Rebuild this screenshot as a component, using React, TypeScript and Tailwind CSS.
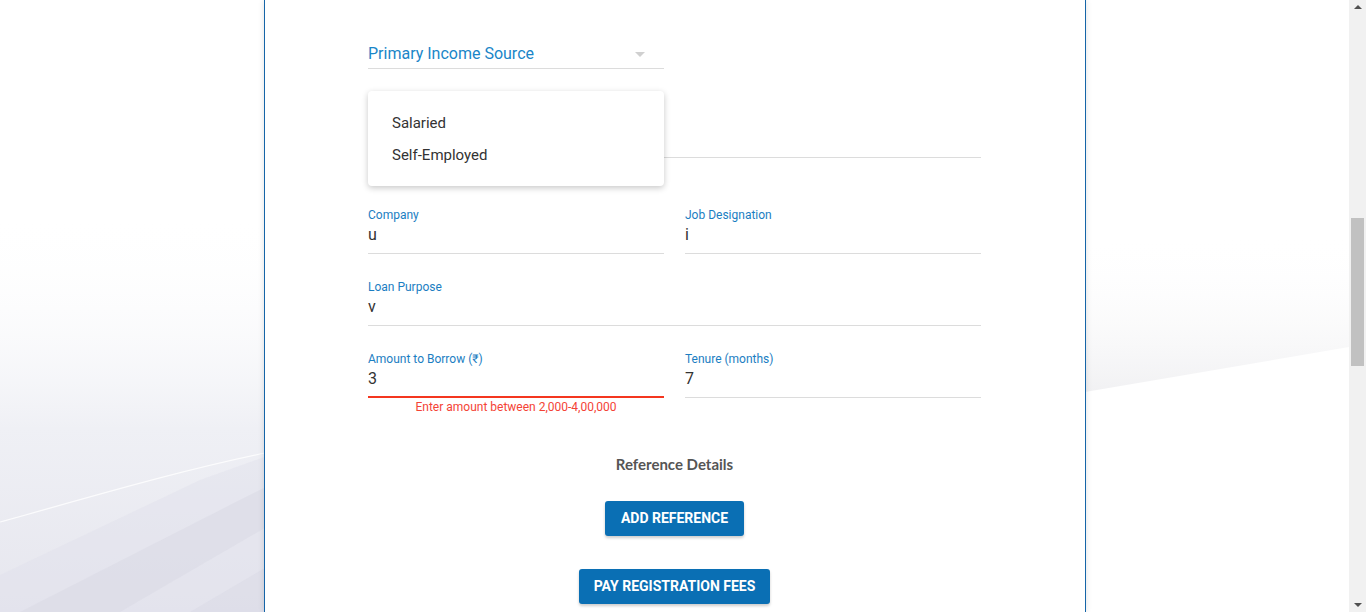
import React from 'react';

const FONT = { fontFamily: 'Roboto, "Liberation Sans", sans-serif' };

const Backdrop = () => (
  <svg className="absolute inset-0 h-full w-full" viewBox="0 0 1349 612" preserveAspectRatio="none">
    <defs>
      <linearGradient id="lfade" x1="0" y1="0" x2="0" y2="1">
        <stop offset="0.35" stopColor="#ffffff" stopOpacity="0" />
        <stop offset="0.7" stopColor="#eff0f5" stopOpacity="1" />
        <stop offset="1" stopColor="#e6e6ee" stopOpacity="1" />
      </linearGradient>
      <linearGradient id="rband" x1="0" y1="0" x2="0" y2="1">
        <stop offset="0" stopColor="#ffffff" stopOpacity="0" />
        <stop offset="1" stopColor="#f1f1f3" stopOpacity="1" />
      </linearGradient>
    </defs>
    <rect x="0" y="0" width="270" height="612" fill="url(#lfade)" />
    <polygon points="0,612 0,575 200,480 270,455 270,612" fill="#e0e0ea" opacity="0.45" />
    <polygon points="20,612 230,505 270,485 270,525 120,612" fill="#d6d6e3" opacity="0.45" />
    <polygon points="190,612 270,565 270,612" fill="#dadae6" opacity="0.5" />
    <path d="M0 522 C 80 500, 180 470, 270 452" stroke="#ffffff" strokeWidth="1.2" fill="none" opacity="0.8" />
    <polygon points="1085,245 1349,235 1349,347 1085,392" fill="url(#rband)" />
  </svg>
);

const Field = ({ label, value, error }: { label: string; value: string; error?: boolean }) => (
  <div
    className={`flex flex-col pt-[1px] ${error ? 'border-b-2 border-[#f4361f] pb-[5px]' : 'border-b border-[#dcdcdc] pb-[6px]'}`}
  >
    <span className="text-[12px] leading-4 text-[#1b7ec2]">{label}</span>
    <span className="text-[16px] leading-6 text-[#333]">{value}</span>
  </div>
);

export default function App() {
  return (
    <div className="flex h-[612px] w-[1366px] overflow-hidden bg-white" style={FONT}>
      <div className="relative flex flex-1 justify-center">
        <Backdrop />
        <div className="relative z-10 flex w-[822px] flex-col items-center border-x border-[#1565a8] bg-white shadow-[0_0_6px_rgba(0,0,0,0.12)]">
          <div className="relative flex w-[613px] flex-col pt-[41px]">
            {/* select */}
            <div className="flex w-[296px] items-center justify-between border-b border-[#dcdcdc] pb-[2px] pt-[1px]">
              <span className="text-[16px] leading-6 text-[#1a86c8]">Primary Income Source</span>
              <span className="mr-[19px] h-0 w-0 border-x-[5px] border-t-[5px] border-x-transparent border-t-[#d0d0d0]" />
            </div>

            {/* field hidden under open menu */}
            <div className="mt-[42px] h-[47px] border-b border-[#dcdcdc]" />

            <div className="mt-[48px] grid grid-cols-2 gap-x-[21px]">
              <Field label="Company" value="u" />
              <Field label="Job Designation" value="i" />
            </div>

            <div className="mt-[24px]">
              <Field label="Loan Purpose" value="v" />
            </div>

            <div className="mt-[24px] grid grid-cols-2 items-start gap-x-[21px]">
              <div className="flex flex-col">
                <Field label="Amount to Borrow (₹)" value="3" error />
                <span className="mt-[1px] text-center text-[12px] leading-4 text-[#f44336]">
                  Enter amount between 2,000-4,00,000
                </span>
              </div>
              <Field label="Tenure (months)" value="7" />
            </div>

            <div
              className="mt-[39px] text-center text-[15px] font-bold leading-5 text-[#555]"
              style={{ fontFamily: 'Lato, "Liberation Sans", sans-serif' }}
            >
              Reference Details
            </div>

            <div className="mt-[27px] flex justify-center">
              <button className="h-[35px] rounded-[3px] bg-[#0a6fb4] px-4 text-[14px] font-bold uppercase text-white shadow-[0_2px_3px_rgba(0,0,0,0.2)]">
                Add Reference
              </button>
            </div>
            <div className="mt-[33px] flex justify-center">
              <button className="h-[35px] rounded-[3px] bg-[#0a6fb4] px-[15px] text-[14px] font-bold uppercase text-white shadow-[0_2px_3px_rgba(0,0,0,0.2)]">
                Pay Registration Fees
              </button>
            </div>

            {/* open menu */}
            <div className="absolute left-0 top-[91px] z-20 flex h-[95px] w-[296px] flex-col rounded bg-white px-6 pt-[16px] shadow-[0_2px_6px_rgba(0,0,0,0.22)]">
              <span className="text-[15px] leading-8 text-[#333]">Salaried</span>
              <span className="text-[15px] leading-8 text-[#333]">Self-Employed</span>
            </div>
          </div>
        </div>
      </div>

      {/* scrollbar */}
      <div className="flex w-[17px] flex-col items-center bg-[#f1f1f1]">
        <span className="mt-[5px] h-0 w-0 border-x-[4px] border-b-[4px] border-x-transparent border-b-[#505050]" />
        <div className="mt-[209px] h-[148px] w-[13px] bg-[#c1c1c1]" />
        <div className="flex-1" />
        <span className="mb-[5px] h-0 w-0 border-x-[4px] border-t-[4px] border-x-transparent border-t-[#505050]" />
      </div>
    </div>
  );
}
